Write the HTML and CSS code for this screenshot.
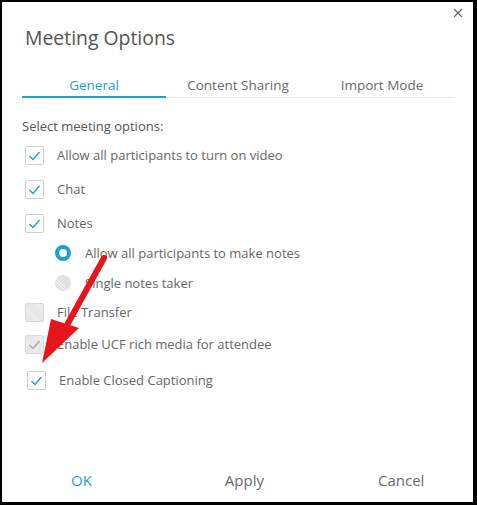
FILE: index.html
```html
<!DOCTYPE html>
<html>
<head>
<meta charset="utf-8">
<link rel="stylesheet" href="styles.css">
</head>
<body>
<div class="dialog">
  <div class="close" aria-label="close">
    <svg width="10" height="10" viewBox="0 0 10 10"><path d="M1 1L9 9M9 1L1 9" stroke="#666" stroke-width="1.2"/></svg>
  </div>
  <h1 class="title">Meeting Options</h1>
  <div class="tabs">
    <div class="tab active">General</div>
    <div class="tab">Content Sharing</div>
    <div class="tab">Import Mode</div>
  </div>
  <div class="content">
    <div class="section-label">Select meeting options:</div>
    <div class="row c1">
      <span class="cb checked"><svg viewBox="0 0 19 19"><path d="M4.5 10L8 13.5L14.5 6" /></svg></span>
      <span class="lbl">Allow all participants to turn on video</span>
    </div>
    <div class="row">
      <span class="cb checked"><svg viewBox="0 0 19 19"><path d="M4.5 10L8 13.5L14.5 6" /></svg></span>
      <span class="lbl">Chat</span>
    </div>
    <div class="row">
      <span class="cb checked"><svg viewBox="0 0 19 19"><path d="M4.5 10L8 13.5L14.5 6" /></svg></span>
      <span class="lbl">Notes</span>
    </div>
    <div class="row radio-row r1">
      <span class="radio on"></span>
      <span class="lbl">Allow all participants to make notes</span>
    </div>
    <div class="row radio-row r2">
      <span class="radio off"></span>
      <span class="lbl">Single notes taker</span>
    </div>
    <div class="row r3">
      <span class="cb disabled"></span>
      <span class="lbl">File Transfer</span>
    </div>
    <div class="row r4">
      <span class="cb disabled checked-gray"><svg viewBox="0 0 19 19"><path d="M4.5 10L8 13.5L14.5 6" /></svg></span>
      <span class="lbl">Enable UCF rich media for attendee</span>
    </div>
    <div class="row r5">
      <span class="cb checked"><svg viewBox="0 0 19 19"><path d="M4.5 10L8 13.5L14.5 6" /></svg></span>
      <span class="lbl">Enable Closed Captioning</span>
    </div>
  </div>
  <div class="buttons">
    <div class="btn ok">OK</div>
    <div class="btn apply">Apply</div>
    <div class="btn cancel">Cancel</div>
  </div>
  <svg class="arrow" width="200" height="400" viewBox="0 0 200 400">
    <path d="M104 258L67 325" stroke="#e8141c" stroke-width="6" stroke-linecap="round" fill="none"/>
    <polygon points="42,363 51,319 79,328" fill="#e8141c"/>
  </svg>
</div>
</body>
</html>
```
FILE: styles.css
```css
html, body {
  margin: 0;
  padding: 0;
  background: #000;
}
body {
  width: 477px;
  height: 505px;
  overflow: hidden;
  font-family: "Open Sans", "Noto Sans", sans-serif;
}
.dialog {
  position: relative;
  margin: 2px 0 0 2px;
  width: 471px;
  height: 500px;
  background: #fff;
  display: flex;
  flex-direction: column;
}
.close {
  position: absolute;
  top: 6px;
  left: 451px;
  width: 10px;
  height: 10px;
}
.close svg { display: block; }
.title {
  margin: 22px 0 0 23px;
  font-size: 19.4px;
  font-weight: 400;
  color: #555;
  line-height: 28px;
}
.tabs {
  margin: 23px 0 0 20px;
  width: 432px;
  display: flex;
  border-bottom: 1px solid #e6e6e6;
}
.tab {
  flex: 1;
  text-align: center;
  font-size: 13.5px;
  color: #6a6a6a;
  line-height: 20px;
  padding-bottom: 2px;
}
.tab.active {
  color: #1a9fd9;
  border-bottom: 2px solid #1a9fd9;
  margin-bottom: -1px;
  padding-bottom: 1px;
}
.content {
  padding: 19px 0 0 20px;
  display: flex;
  flex-direction: column;
}
.section-label {
  font-size: 13px;
  color: #555;
  line-height: 18px;
}
.row {
  display: flex;
  align-items: center;
  height: 34px;
  margin-left: 3px;
}
.c1 { margin-top: 3px; }
.lbl {
  font-size: 13px;
  color: #666;
  margin-left: 13px;
  white-space: nowrap;
}
.cb {
  width: 19px;
  height: 19px;
  border: 1px solid #d0d0d0;
  border-radius: 2px;
  box-sizing: border-box;
  display: flex;
  align-items: center;
  justify-content: center;
  background: #fff;
  flex: none;
}
.cb svg {
  width: 19px;
  height: 19px;
  flex: none;
}
.cb svg path {
  fill: none;
  stroke: #1a9fd9;
  stroke-width: 1.4;
}
.cb.disabled {
  background: repeating-linear-gradient(45deg, #e4e4e4 0 1px, #efefef 1px 2px);
  border-color: #d8d8d8;
}
.cb.checked-gray svg path { stroke: #a8a8a8; }
.radio-row { margin-left: 33px; }
.radio-row .lbl { margin-left: 14px; }
.r1 { height: 26px; }
.r2 { height: 34px; }
.r3 { height: 24px; }
.r4 { height: 40px; }
.r5 { margin-left: 5px; height: 32px; }
.radio {
  width: 16px;
  height: 16px;
  border-radius: 50%;
  box-sizing: border-box;
  flex: none;
}
.radio.on {
  border: 4.5px solid #1a9fd9;
  background: #fff;
}
.radio.off {
  background: repeating-linear-gradient(45deg, #dcdcdc 0 1px, #ececec 1px 2px);
}
.buttons {
  margin-top: auto;
  display: flex;
  padding: 0 0 4px 69px;
  height: 28px;
}
.btn {
  font-size: 15px;
  color: #6a6a6a;
  line-height: 20px;
}
.btn.ok { color: #1a9fd9; }
.btn.apply { margin-left: 133px; }
.btn.cancel { margin-left: 114px; }
.arrow {
  position: absolute;
  left: -2px;
  top: -2px;
  pointer-events: none;
}
```
